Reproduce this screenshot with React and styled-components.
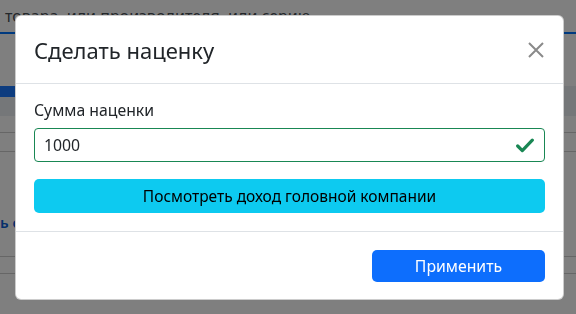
import React from "react";
import styled, { createGlobalStyle } from "styled-components";

const Global = createGlobalStyle`
  html, body {
    margin: 0;
    padding: 0;
    background: #fff;
    font-family: "Noto Sans", "Open Sans", Arial, sans-serif;
    color: #212529;
  }
  * { box-sizing: border-box; }
`;

const Page = styled.div`
  width: 576px;
  height: 314px;
  overflow: hidden;
  background: #fff;
`;

const SearchText = styled.div`
  padding: 4px 0 0 5px;
  height: 34px;
  font-size: 16px;
  line-height: 24px;
  color: #495057;
  border-bottom: 2px solid #0074ff;
`;

const Band = styled.div`
  margin-top: 52px;
  height: 30px;
  background: #ebeff3;
  display: flex;
  flex-direction: column;
`;

const BandTab = styled.div`
  width: 40px;
  height: 11px;
  background: #1a78ff;
`;

const TableRow = styled.div`
  height: ${(p) => p.h}px;
  border-bottom: 1px solid #ccc;
`;

const LinkRow = styled.div`
  height: ${(p) => p.h}px;
  padding-top: 60px;
  font-size: 15px;
  line-height: 20px;
  font-weight: 600;
  color: #0b5ed7;
  border-bottom: 1px solid #ccc;
`;

const Backdrop = styled.div`
  position: fixed;
  inset: 0;
  background: rgba(0, 0, 0, 0.5);
`;

const Modal = styled.div`
  position: fixed;
  top: 15px;
  left: 15px;
  width: 549px;
  background: #fff;
  border: 1px solid rgba(0, 0, 0, 0.2);
  border-radius: 6px;
  display: flex;
  flex-direction: column;
`;

const Header = styled.div`
  height: 68px;
  padding: 0 15px 0 18px;
  display: flex;
  align-items: center;
  justify-content: space-between;
  border-bottom: 1px solid #dee2e6;
`;

const Title = styled.h5`
  margin: 0;
  font-size: 22px;
  font-weight: 400;
  line-height: 30px;
  color: #212529;
`;

const CloseButton = styled.button`
  width: 24px;
  height: 24px;
  padding: 0;
  border: 0;
  background: transparent;
  display: flex;
  align-items: center;
  justify-content: center;
  color: #8a8a8a;
`;

const Body = styled.div`
  padding: 14px 18px 18px;
  display: flex;
  flex-direction: column;
`;

const Label = styled.label`
  font-size: 15.8px;
  line-height: 24px;
  margin-bottom: 6px;
  color: #212529;
`;

const InputWrap = styled.div`
  position: relative;
  height: 34px;
  border: 1px solid #198754;
  border-radius: 4px;
  display: flex;
  align-items: center;
`;

const Input = styled.input`
  flex: 1;
  border: 0;
  outline: none;
  background: transparent;
  padding: 0 40px 0 9px;
  font-family: inherit;
  font-size: 15.8px;
  color: #212529;
`;

const Check = styled.svg`
  position: absolute;
  right: 10px;
  top: 9px;
`;

const InfoButton = styled.button`
  margin-top: 17px;
  height: 34px;
  border: 0;
  border-radius: 5px;
  background: #0dcaf0;
  color: #000;
  font-family: inherit;
  font-size: 15.5px;
`;

const Footer = styled.div`
  border-top: 1px solid #dee2e6;
  padding: 18px 18px 17px;
  display: flex;
  justify-content: flex-end;
`;

const PrimaryButton = styled.button`
  width: 173px;
  height: 32px;
  border: 0;
  border-radius: 5px;
  background: #0d6efd;
  color: #fff;
  font-family: inherit;
  font-size: 15.8px;
`;

export default function App() {
  return (
    <>
      <Global />
      <Page>
        <SearchText>товара, или производителя, или серию</SearchText>
        <Band>
          <BandTab />
        </Band>
        <TableRow h={17} />
        <TableRow h={19} />
        <LinkRow h={105}>ь с</LinkRow>
        <TableRow h={17} />
      </Page>
      <Backdrop />
      <Modal>
        <Header>
          <Title>Сделать наценку</Title>
          <CloseButton aria-label="Закрыть">
            <svg width="16" height="16" viewBox="0 0 16 16">
              <path d="M1 1L15 15M15 1L1 15" stroke="currentColor" strokeWidth="2" />
            </svg>
          </CloseButton>
        </Header>
        <Body>
          <Label>Сумма наценки</Label>
          <InputWrap>
            <Input defaultValue="1000" />
            <Check width="18" height="15" viewBox="0 0 18 15">
              <path d="M1.7 8L6.3 12.6L16.3 2.2" fill="none" stroke="#198754" strokeWidth="3.2" strokeLinecap="round" strokeLinejoin="round" />
            </Check>
          </InputWrap>
          <InfoButton>Посмотреть доход головной компании</InfoButton>
        </Body>
        <Footer>
          <PrimaryButton>Применить</PrimaryButton>
        </Footer>
      </Modal>
    </>
  );
}
